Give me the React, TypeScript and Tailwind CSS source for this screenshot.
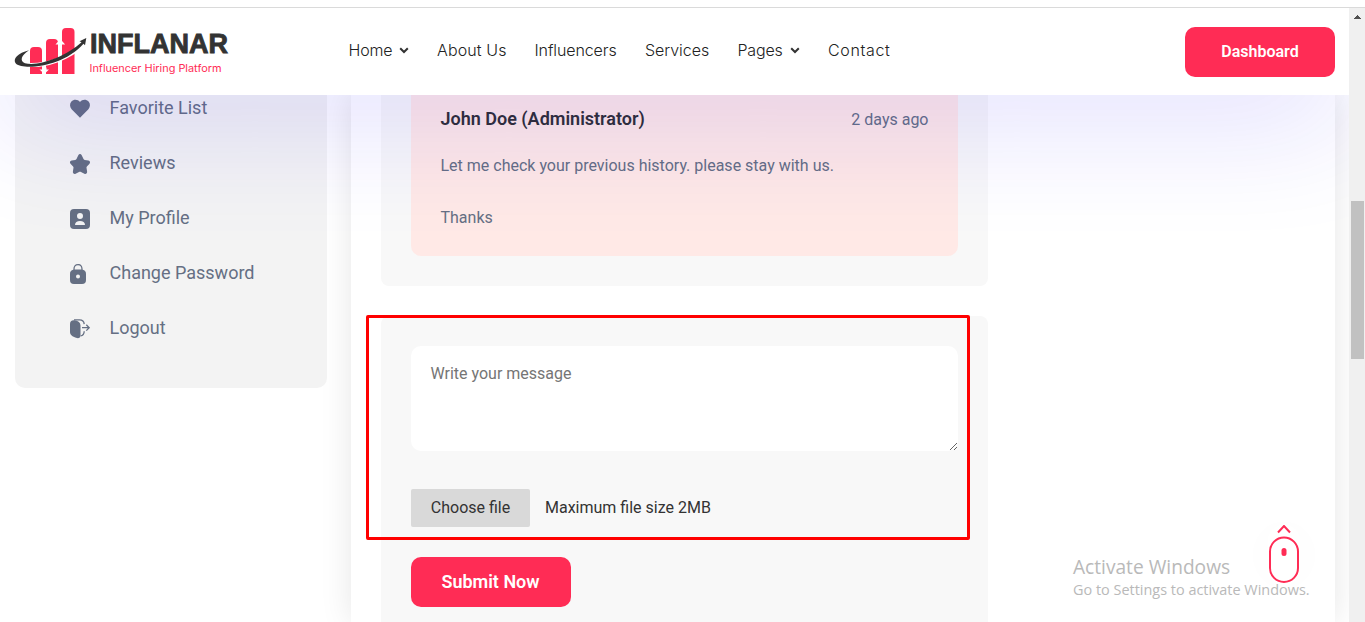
import React from "react";

const items = ["Favorite List", "Reviews", "My Profile", "Change Password", "Logout"];

function MenuIcon({ name }: { name: string }) {
  const body: Record<string, React.ReactNode> = {
    "Favorite List": <path d="M10 18.8 1.6 10.2C-.4 8-.5 4.600 1.400 2.500 3.700 0 7.800 0 10 3 12.200 0 16.300 0 18.600 2.500 20.500 4.600 20.400 8 18.400 10.200Z" />,
    Reviews: <path d="M8.300 1.200c.7-1.600 2.700-1.600 3.400 0l1.800 3.900c.2.500.7.800 1.200.9l3.700.5c1.600.2 2.200 2.100 1.100 3.200l-2.600 2.700c-.4.400-.5.900-.4 1.400l.6 3.800c.3 1.600-1.300 2.900-2.700 2.100l-3.400-1.800c-.6-.3-1.400-.3-2 0l-3.400 1.800c-1.400.8-3-.5-2.700-2.100l.6-3.800c.1-.5 0-1-.4-1.400L.5 9.700C-.6 8.600 0 6.700 1.600 6.500l3.700-.5c.5-.1 1-.4 1.200-.9z" />,
    "My Profile": <path fillRule="evenodd" d="M4 0h12a4 4 0 0 1 4 4v12a4 4 0 0 1-4 4H4a4 4 0 0 1-4-4V4a4 4 0 0 1 4-4ZM10 4a3 3 0 1 0 0 6 3 3 0 0 0 0-6ZM5 16h10c0-2.500-2-4-5-4s-5 1.500-5 4Z" />,
    "Change Password": <path fillRule="evenodd" d="M3.300 5.800C3.300 2 5 0 8 0s4.700 2 4.700 5.800C15 6.300 16 7.600 16 10v6c0 2.800-1.200 4-4 4H4c-2.800 0-4-1.200-4-4v-6c0-2.400 1-3.700 3.300-4.200ZM4.600 5.500h6.800C11.400 2.700 10.400 1.300 8 1.300S4.600 2.700 4.600 5.500ZM8 10.500a2 2 0 1 0 0 4 2 2 0 0 0 0-4Z" />,
    Logout: (
      <>
        <path d="M4.500 1.200C7.500 1.500 10.500 3.200 10.500 6.500v9.800c0 2.700-2 3.500-4.500 2.500C2.500 17.500 0 16 0 13V5c0-2.600 1.500-4.100 4.500-3.800Z" />
        <path d="M4 .9h5.500c3 0 4.500 1.300 4.700 4.200M14.200 12.300c-.1 2.900-1.200 4.400-3.600 4.600M12 8.700h7M16.300 5.800l2.900 2.900-2.900 2.900" fill="none" stroke="currentColor" strokeWidth="1.300" />
      </>
    ),
  };
  return (
    <svg viewBox="0 0 20 20" className="size-5 shrink-0 overflow-visible" fill="currentColor">
      {body[name]}
    </svg>
  );
}

function Logo() {
  return (
    <svg width="216" height="52" viewBox="14 26 216 52" className="shrink-0 overflow-visible">
      <g fill="#ff2c55">
        <path d="M30 74V51q0-4 4-4h4q4 0 4 4v23Z" />
        <path d="M46 74V43q0-4 4-4h4q4 0 4 4v31Z" />
        <path d="M62 74V32q0-4 4-4h4.500q4 0 4 4v42Z" />
      </g>
      <path d="m55.500 44.500 4.800-5.500 4.800 5.500Z" fill="#fff" />
      <path d="M42 67.500h4.500v2H49L44.300 74l-4.800-4.500H42Z" fill="#fff" />
      <path d="M28 65C46 66 68 59 84 44" fill="none" stroke="#fff" strokeWidth="4" />
      <path d="M29 50.300C18 53 12 59 16 63.800 24 70.500 63 67 83.500 43.800l1.500 1.500 1.300-7.300-6.800 3.300 2 1C66 56.500 38 67 25 63.200 19.500 61 21 55.500 29 50.300Z" fill="#333" />
      <text x="90" y="52.500" textLength="138" lengthAdjust="spacingAndGlyphs" fontSize="27.500" fontWeight="700" fill="#333" stroke="#333" strokeWidth=".9" className="font-['Liberation_Sans',sans-serif]">INFLANAR</text>
      <text x="89.500" y="72" textLength="132" lengthAdjust="spacingAndGlyphs" fontSize="10.800" fill="#ff2c55" className="font-[Inter,sans-serif]">Influencer Hiring Platform</text>
    </svg>
  );
}

function NavItem({ label, className, menu }: { label: string; className: string; menu?: boolean }) {
  return (
    <div className={`flex items-center justify-between ${className}`}>
      <span>{label}</span>
      {menu && (
        <svg width="10" height="7" viewBox="0 0 10 7" className="mt-0.5">
          <path d="m1.200 1.200 3.800 3.800 3.800-3.800" fill="none" stroke="#333" strokeWidth="2" />
        </svg>
      )}
    </div>
  );
}

export default function App() {
  return (
    <div className="flex h-[622px] w-[1365px] flex-col overflow-hidden bg-white font-[Roboto,sans-serif] text-base text-[#656f83]">
      <div className="h-2 shrink-0 border-b border-[#dadada]" />
      <div className="flex min-h-0 flex-1">
        <div className="relative flex w-[1349px] flex-col overflow-hidden">
          <header className="relative z-10 flex h-[87px] shrink-0 items-center bg-white pr-3.5 pl-3.5 shadow-[0_24px_120px_rgba(45,27,251,0.155)]">
            <Logo />
            <nav className="mb-1 ml-[118.500px] flex gap-[28.500px] font-[Inter,sans-serif] text-base font-light whitespace-nowrap text-[#222]">
              <NavItem label="Home" className="w-[60px] tracking-[-0.2px]" menu />
              <NavItem label="About Us" className="w-[69px] tracking-[0.12px]" />
              <NavItem label="Influencers" className="w-[82px] tracking-[-0.1px]" />
              <NavItem label="Services" className="w-[64px] tracking-[-0.05px]" />
              <NavItem label="Pages" className="w-[62px] tracking-[-0.2px]" menu />
              <NavItem label="Contact" className="w-[63px] tracking-[0.65px]" />
            </nav>
            <button className="ml-auto h-[50px] w-[150px] rounded-[10px] bg-[#ff2c55] font-semibold text-white">Dashboard</button>
          </header>

          <main className="flex min-h-0 flex-1 pr-3.5 pl-[15px]">
            <aside className="relative mr-6 h-[293px] w-[312px] shrink-0 rounded-b-[10px] bg-[#f3f3f3] pl-[55px]">
              <ul className="flex flex-col pt-[3px] text-lg">
                {items.map((item) => (
                  <li key={item} className="mb-[33px] flex h-[22px] items-center gap-[19.500px]">
                    <MenuIcon name={item} />
                    <span className="pb-0.5">{item}</span>
                  </li>
                ))}
              </ul>
            </aside>

            <section className="min-w-0 flex-1 bg-white pl-[30px] shadow-[0_0_30px_rgba(0,0,0,0.1)]">
              <div className="w-[607px]">
                <div className="mb-[30px] h-[191px] rounded-b-[8px] bg-[#f8f8f8] px-[30px]">
                  <article className="h-[161px] rounded-b-[10px] bg-[#ffe9e6] px-[29.500px] pt-2.5">
                    <div className="flex h-7 items-center justify-between">
                      <h3 className="text-lg font-semibold text-[#2f2f33]">John Doe (Administrator)</h3>
                      <span className="pt-0.5">2 days ago</span>
                    </div>
                    <p className="mt-5 leading-[26px]">Let me check your previous history. please stay with us.</p>
                    <p className="mt-[26px] leading-[26px]">Thanks</p>
                  </article>
                </div>

                <form className="h-[320px] rounded-t-[8px] bg-[#f8f8f8] px-[30px] pt-[30px]">
                  <textarea placeholder="Write your message" className="block h-[105px] w-full resize rounded-[10px] bg-white px-[19.500px] py-4 placeholder:text-[#757575]" />
                  <div className="mt-[38px] flex items-center text-[#333]">
                    <div className="flex h-[38px] w-[119px] items-center justify-center rounded-[2px] bg-[#d9d9d9]">Choose file</div>
                    <span className="ml-[15px]">Maximum file size 2MB</span>
                  </div>
                  <button type="button" className="mt-[30px] h-[50px] w-[160px] rounded-[10px] bg-[#ff2c55] pr-px text-lg font-semibold text-white">Submit Now</button>
                </form>
              </div>
            </section>
          </main>

          <div className="absolute top-[307px] left-[366px] z-20 h-[225px] w-[604px] rounded-[2px] border-3 border-[#f00]" />
          <div className="absolute top-[545px] left-[1073px] z-20 font-['Open_Sans',sans-serif] whitespace-nowrap text-[#b9b9b9]">
            <div className="text-[19.150px] leading-7">Activate Windows</div>
            <div className="text-[14.450px] leading-[18px]">Go to Settings to activate Windows.</div>
          </div>
          <div className="absolute top-[517px] left-[1268px] z-20 rounded-full shadow-[0_0_60px_rgba(0,0,0,0.025)]">
            <svg width="32" height="60" viewBox="0 0 32 60" fill="none" stroke="#ff2c55" strokeWidth="2">
              <path d="m10 7.500 6-6.500 6 6.500" />
              <rect x="2" y="12.500" width="28" height="44.500" rx="14" />
              <rect x="13.500" y="23" width="5" height="8" rx="2.500" fill="#ff2c55" stroke="none" />
            </svg>
          </div>
        </div>

        <div className="flex w-4 flex-col items-center bg-[#f0f0f0]">
          <svg width="7" height="4" viewBox="0 0 7 4" className="mt-[7px]" shapeRendering="crispEdges">
            <path d="M3 0h1v1h1v1h1v1h1v1H0V3h1V2h1V1h1Z" fill="#505050" />
          </svg>
          <div className="mt-[182px] h-[158px] w-[13px] bg-[#c1c1c1]" />
        </div>
      </div>
    </div>
  );
}
